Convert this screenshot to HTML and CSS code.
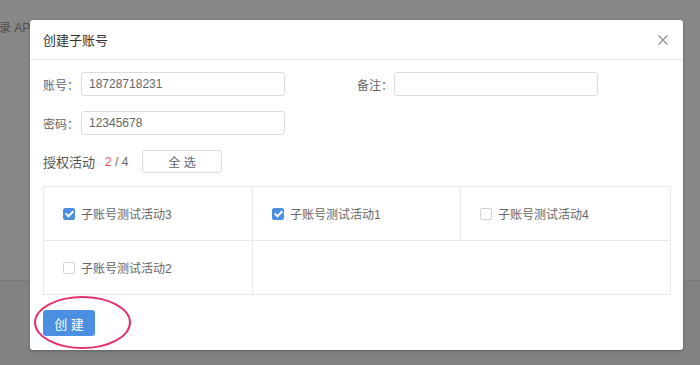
FILE: index.html
```html
<!DOCTYPE html>
<html>
<head>
<meta charset="UTF-8">
<link rel="stylesheet" href="styles.css">
</head>
<body>
<div class="page">
  <div class="panel">
    <div class="panel-text">录 APP 账号管理</div>
  </div>
</div>
<div class="mask"></div>
<div class="modal">
  <div class="modal-header">
    <span class="modal-title">创建子账号</span>
    <svg class="modal-close" width="10" height="10" viewBox="0 0 10 10"><path d="M0.5 0.5L9.5 9.5M9.5 0.5L0.5 9.5" stroke="#8c8c8c" stroke-width="1.1" fill="none"/></svg>
  </div>
  <div class="modal-body">
    <div class="form-row">
      <div class="field">
        <label class="field-label">账号：</label>
        <input class="field-input" type="text" value="18728718231">
      </div>
      <div class="field field-remark">
        <label class="field-label">备注：</label>
        <input class="field-input" type="text" value="">
      </div>
    </div>
    <div class="form-row">
      <div class="field">
        <label class="field-label">密码：</label>
        <input class="field-input" type="text" value="12345678">
      </div>
    </div>
    <div class="auth-row">
      <span class="auth-title">授权活动</span>
      <span class="auth-count"><em>2</em> / 4</span>
      <button class="btn-select-all">全 选</button>
    </div>
    <div class="activity-grid">
      <div class="activity-cell"><span class="check checked"></span>子账号测试活动3</div>
      <div class="activity-cell"><span class="check checked"></span>子账号测试活动1</div>
      <div class="activity-cell"><span class="check"></span>子账号测试活动4</div>
      <div class="activity-cell"><span class="check"></span>子账号测试活动2</div>
      <div class="activity-cell activity-empty"></div>
    </div>
    <div class="modal-footer">
      <button class="btn-primary">创 建</button>
    </div>
  </div>
  <div class="highlight"></div>
</div>
</body>
</html>
```

FILE: styles.css
```css
* {
  box-sizing: border-box;
  font-family: "Helvetica Neue", "Liberation Sans", "Noto Sans CJK SC", sans-serif;
}
body {
  margin: 0;
  width: 700px;
  height: 365px;
  overflow: hidden;
  background-color: #f6f6f6;
  position: relative;
}
.page {
  height: 365px;
}
.panel {
  height: 281px;
  background-color: #fff;
  border-bottom: 1px solid #e4e4e4;
  padding-top: 18px;
}
.panel-text {
  font-size: 12px;
  color: #999;
  margin-left: -1px;
}
.mask {
  position: absolute;
  left: 0;
  top: 0;
  right: 0;
  bottom: 0;
  background-color: rgba(0, 0, 0, 0.47);
}

.modal {
  position: absolute;
  left: 30px;
  top: 20px;
  width: 653px;
  height: 330px;
  background-color: #fff;
  border-radius: 3px;
  box-shadow: 0 1px 3px rgba(0, 0, 0, 0.3);
}
.modal-header {
  height: 40px;
  border-bottom: 1px solid #e8e8e8;
  display: flex;
  align-items: center;
  justify-content: space-between;
  padding: 0 15px 0 13px;
}
.modal-title {
  font-size: 13px;
  color: #333;
}
.modal-close {
  display: block;
}
.modal-body {
  padding: 12px 13px 0 13px;
}

.form-row {
  display: flex;
  height: 24px;
  margin-bottom: 15px;
}
.field {
  display: flex;
  align-items: center;
}
.field-remark {
  margin-left: 72px;
}
.field-label {
  font-size: 12px;
  color: #666;
  width: 38px;
}
.field-remark .field-label {
  width: 37px;
}
.field-input {
  width: 204px;
  height: 24px;
  border: 1px solid #dcdcdc;
  border-radius: 3px;
  padding: 0 7px;
  font-size: 12px;
  color: #666;
  outline: none;
}

.auth-row {
  display: flex;
  align-items: center;
  height: 23px;
  margin-top: 1px;
  margin-bottom: 13px;
}
.auth-title {
  font-size: 13px;
  color: #555;
  width: 62px;
}
.auth-count {
  font-size: 12px;
  color: #666;
  width: 37px;
}
.auth-count em {
  font-style: normal;
  color: #e9534f;
}
.btn-select-all {
  width: 80px;
  height: 23px;
  background: #fff;
  border: 1px solid #dcdcdc;
  border-radius: 3px;
  font-size: 12px;
  color: #666;
  padding: 0;
}

.activity-grid {
  display: grid;
  grid-template-columns: 209px 208px 210px;
  border-top: 1px solid #e8e8e8;
  border-left: 1px solid #e8e8e8;
  width: 627px;
}
.activity-cell {
  height: 54px;
  border-right: 1px solid #e8e8e8;
  border-bottom: 1px solid #e8e8e8;
  display: flex;
  align-items: center;
  padding-left: 19px;
  font-size: 12px;
  color: #666;
}
.activity-empty {
  grid-column: span 2;
}
.check {
  width: 12px;
  height: 12px;
  border: 1px solid #d2d2d2;
  border-radius: 2px;
  margin-right: 6px;
  position: relative;
  background: #fff;
}
.check.checked {
  background-color: #4a8fe2;
  border-color: #4a8fe2;
}
.check.checked::after {
  content: "";
  position: absolute;
  left: 3px;
  top: 0px;
  width: 3px;
  height: 6px;
  border-right: 2px solid #fff;
  border-bottom: 2px solid #fff;
  transform: rotate(45deg);
}

.modal-footer {
  padding-top: 15px;
}
.btn-primary {
  width: 52px;
  height: 26px;
  background-color: #4a8fe2;
  border: none;
  border-radius: 3px;
  color: #fff;
  font-size: 13px;
  padding: 0;
}

.highlight {
  position: absolute;
  left: 4px;
  top: 276px;
  width: 97px;
  height: 53px;
  border: 2px solid #e3336b;
  border-radius: 50%;
}
```
